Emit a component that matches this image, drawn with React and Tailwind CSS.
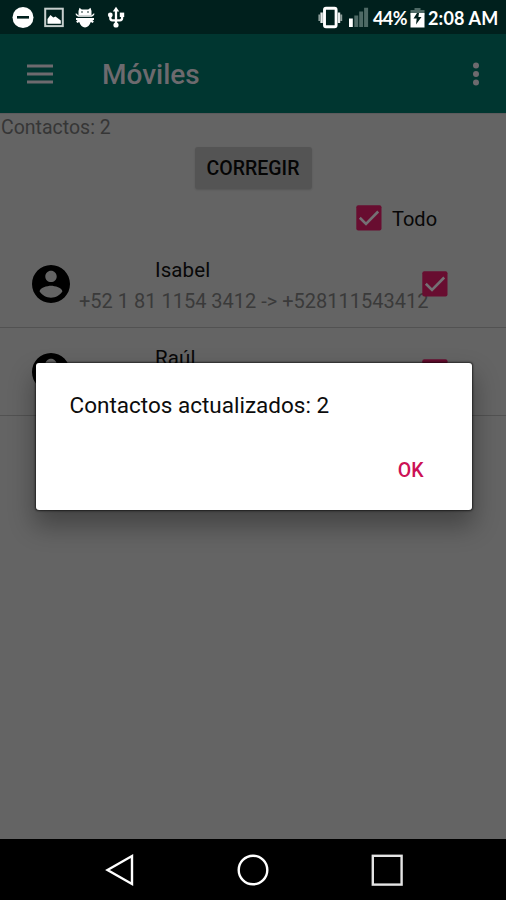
import React, { useState } from "react";

const contacts = [
  { name: "Isabel", change: "+52 1 81 1154 3412 -> +528111543412" },
  { name: "Raúl", change: "" },
];

function CheckBox() {
  return (
    <svg viewBox="0 0 26 26" className="block h-[26px] w-[26px] shrink-0">
      <rect x="0.3" y="0.3" width="25.2" height="25.2" rx="2" fill="#680d30" />
      <path d="M3.8 12.8 L10 18.9 L22.2 6.5" fill="none" stroke="#747074" strokeWidth="2.6" />
    </svg>
  );
}

function Avatar() {
  return (
    <svg viewBox="2 2 20 20" className="block h-[38px] w-[38px] shrink-0 fill-black">
      <path d="M12 2C6.48 2 2 6.48 2 12s4.48 10 10 10 10-4.48 10-10S17.52 2 12 2zm0 3c1.66 0 3 1.34 3 3s-1.34 3-3 3-3-1.34-3-3 1.34-3 3-3zm0 14.2c-2.5 0-4.71-1.28-6-3.22.03-1.99 4-3.08 6-3.08 1.99 0 5.97 1.09 6 3.08-1.29 1.94-3.5 3.22-6 3.22z" />
    </svg>
  );
}

function StatusBar() {
  return (
    <div className="flex h-[34px] items-center bg-[#00201d] text-white">
      <svg viewBox="0 0 130 34" className="h-[34px] w-[130px]">
        <circle cx="23" cy="17.5" r="10.5" fill="#fff" />
        <rect x="17" y="16" width="12" height="2.6" fill="#00201d" />
        <rect x="45.2" y="8.700" width="17.600" height="17.400" fill="none" stroke="#c6cfcd" strokeWidth="2" />
        <path d="M47.500 23.700v-4.700l3-4 2.800 2.500 2.200-1 5.300 4v3.200z" fill="#fff" />
        <path d="M78.500 15.200v-4.200l1-3.200 2.200 1.700h6.600l2.200-1.700 1 3.200v4.200z" fill="#fff" />
        <path d="M75.800 13l2.500 2.200h13.400l2.500-2.200v2l-2.300 1.800h-13.800l-2.300-1.800z" fill="#fff" />
        <path d="M76 18h18v2h-1.500l1.300 1.600-1 1.400-2-1c-1.200 3.200-3.200 5.500-5.800 5.500s-4.600-2.300-5.800-5.500l-2 1-1-1.400L77.500 20H76z" fill="#fff" />
        <circle cx="82" cy="12" r="0.8" fill="#00201d" />
        <circle cx="88" cy="12" r="0.8" fill="#00201d" />
        <g fill="none" stroke="#fff" strokeWidth="2.300">
          <path d="M116 10v15M110.300 15v3q0 2.300 2 2.300h7.600q2.200 0 2.200-2.300v-3" />
        </g>
        <path d="M116 6.800l3.200 4.700h-6.400z" fill="#fff" />
        <circle cx="116" cy="25" r="2.600" fill="#fff" />
        <circle cx="110.300" cy="15" r="2.400" fill="#fff" />
        <rect x="119.800" y="12.600" width="4.400" height="4.400" fill="#fff" />
      </svg>
      <div className="ml-auto flex items-center pr-[7px] font-['Lato'] text-[18px] font-bold leading-[34px]">
        <svg viewBox="0 0 56 34" className="h-[34px] w-[56px]">
          <rect x="7.500" y="8.300" width="11.600" height="18.400" rx="1.500" fill="none" stroke="#fff" strokeWidth="2.900" />
          <path d="M4.600 12.500v10.500M22 12.500v10.500" stroke="#e8eceb" strokeWidth="2.400" />
          <path d="M2.400 14.500v6.500M24.200 14.500v6.500" stroke="#8f9f9c" strokeWidth="2" />
          <rect x="32" y="18.500" width="3.800" height="8.500" fill="#fff" />
          <path d="M37.300 15.500h3.900V27h-3.900zM42.200 11.500h3.900V27h-3.900zM47.100 7.700h4V27h-4z" fill="#4f6a66" />
        </svg>
        <span className="w-[37px] whitespace-nowrap pt-px tracking-[-0.6px]">44%</span>
        <svg viewBox="0 0 18 34" className="h-[34px] w-[18px]">
          <path d="M4.500 8h6v2h4v5h-14v-5h4z" fill="#4f6a66" />
          <path d="M0.500 13h14v14.500h-14z" fill="#fff" />
          <path d="M7 13l-3.500 5.500h3.200l-.7 6 5.500-7.500H8.400l.6-4z" fill="#00201d" />
        </svg>
        <span className="w-[71px] whitespace-nowrap pt-px tracking-[0.15px]">2:08 AM</span>
      </div>
    </div>
  );
}

function Toolbar() {
  return (
    <div className="flex h-[79px] items-center bg-[#003630] pl-[27px] pr-[25px]">
      <svg viewBox="0 0 26 20" className="h-[20px] w-[26px] fill-[#6d6a6e]">
        <path d="M0 .5h26v3H0zM0 8.500h26v3H0zM0 16.500h26v3H0z" />
      </svg>
      <h1 className="ml-[49px] pt-[3px] text-[28px] font-medium leading-none text-[#6d6a6e]">Móviles</h1>
      <svg viewBox="0 0 10 24" className="ml-auto h-[24px] w-[10px] fill-[#6d6a6e]">
        <circle cx="5" cy="3.500" r="3" />
        <circle cx="5" cy="12" r="3" />
        <circle cx="5" cy="20.500" r="3" />
      </svg>
    </div>
  );
}

function ContactRow({ contact }) {
  return (
    <div className="flex h-[88px] items-center border-b border-[#525252] pl-[32px]">
      <Avatar />
      <div className="ml-[9px] h-[58px] w-[343px] whitespace-nowrap text-[20px]">
        <p className="pl-[76px] text-[20.5px] leading-[30px] tracking-[0.1px] text-[#080808]">{contact.name}</p>
        <p className="leading-[32px] text-[#3a3a3a]">{contact.change}</p>
      </div>
      <div className="z-10">
        <CheckBox />
      </div>
    </div>
  );
}

function NavBar() {
  return (
    <div className="flex h-[61px] items-center justify-between bg-black pl-[105px] pr-[102px]">
      <svg viewBox="0 0 30 34" className="h-[34px] w-[30px] fill-none stroke-white stroke-[2.4px]">
        <path d="M2.500 17L27 3v28z" />
      </svg>
      <svg viewBox="0 0 34 34" className="h-[34px] w-[34px] fill-none stroke-white stroke-[2.4px]">
        <circle cx="17" cy="17" r="14.300" />
      </svg>
      <svg viewBox="0 0 34 34" className="h-[34px] w-[34px] fill-none stroke-[#e4e4e4] stroke-[2.4px]">
        <rect x="2.800" y="2.800" width="28.800" height="28.800" />
      </svg>
    </div>
  );
}

export default function App() {
  const [open, setOpen] = useState(true);

  return (
    <div className="relative flex h-[900px] w-[506px] flex-col overflow-hidden bg-[#646464] font-['Roboto',sans-serif]">
      <StatusBar />
      <Toolbar />

      <main className="flex-1 border-t border-[#5c5a5c]">
        <p className="pl-px text-[19.5px] leading-[27px] text-[#363636]">Contactos: 2</p>
        <div className="flex justify-center pt-[6px]">
          <button className="h-[42px] w-[117px] rounded-[3px] bg-[#545454] pt-px text-[19.5px] font-medium text-[#050505] shadow-[0_1px_2px_rgba(0,0,0,0.15)]">
            CORREGIR
          </button>
        </div>
        <label className="ml-[356px] mt-[16px] flex h-[26px] items-center text-[20px] text-[#080808]">
          <CheckBox />
          <span className="ml-[10px] pt-[2px]">Todo</span>
        </label>
        <div className="pt-[9px]">
          {contacts.map((contact) => (
            <ContactRow key={contact.name} contact={contact} />
          ))}
        </div>
      </main>

      <NavBar />

      {open && (
        <div className="absolute left-[35.500px] top-[363px] z-20 flex h-[147px] w-[436px] flex-col rounded-[3px] bg-white pl-[34px] pr-[48px] shadow-[0_0_2px_1px_rgba(0,0,0,0.6),0_14px_26px_2px_rgba(0,0,0,0.33)]">
          <p className="pt-[27px] text-[22.5px] leading-[30px] text-[#0c0c0c]">Contactos actualizados: 2</p>
          <button
            onClick={() => setOpen(false)}
            className="mt-[36px] self-end text-[19.5px] font-medium leading-[30px] text-[#cc1155]"
          >
            OK
          </button>
        </div>
      )}
    </div>
  );
}
